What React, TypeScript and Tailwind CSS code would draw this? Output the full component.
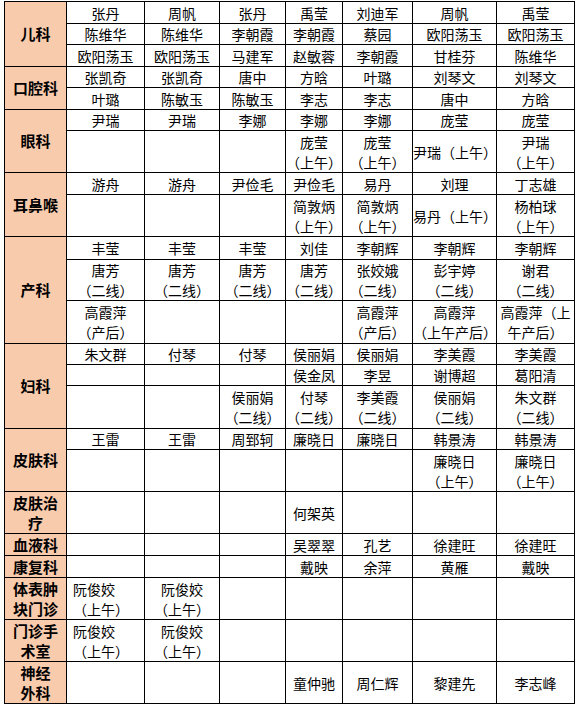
type Cell = string | null | { text: string; left?: boolean };

type Row = { h: string; cells: Cell[] };

type Dept = { name: string[]; rows: Row[] };

const depts: Dept[] = [
  {
    name: ['儿科'],
    rows: [
      { h: 'h-[22px]', cells: ['张丹', '周帆', '张丹', '禹莹', '刘迪军', '周帆', '禹莹'] },
      { h: 'h-[20px]', cells: ['陈维华', '陈维华', '李朝霞', '李朝霞', '蔡园', '欧阳荡玉', '欧阳荡玉'] },
      { h: 'h-[22px]', cells: ['欧阳荡玉', '欧阳荡玉', '马建军', '赵敏蓉', '李朝霞', '甘桂芬', '陈维华'] },
    ],
  },
  {
    name: ['口腔科'],
    rows: [
      { h: 'h-[21px]', cells: ['张凯奇', '张凯奇', '唐中', '方晗', '叶璐', '刘琴文', '刘琴文'] },
      { h: 'h-[22px]', cells: ['叶璐', '陈敏玉', '陈敏玉', '李志', '李志', '唐中', '方晗'] },
    ],
  },
  {
    name: ['眼科'],
    rows: [
      { h: 'h-[21px]', cells: ['尹瑞', '尹瑞', '李娜', '李娜', '李娜', '庞莹', '庞莹'] },
      { h: 'h-[42px]', cells: [null, null, null, '庞莹\n（上午）', '庞莹\n（上午）', '尹瑞（上午）', '尹瑞\n（上午）'] },
    ],
  },
  {
    name: ['耳鼻喉'],
    rows: [
      { h: 'h-[22px]', cells: ['游舟', '游舟', '尹俭毛', '尹俭毛', '易丹', '刘理', '丁志雄'] },
      { h: 'h-[42px]', cells: [null, null, null, '简敦炳\n（上午）', '简敦炳\n（上午）', '易丹（上午）', '杨柏球\n（上午）'] },
    ],
  },
  {
    name: ['产科'],
    rows: [
      { h: 'h-[23px]', cells: ['丰莹', '丰莹', '丰莹', '刘佳', '李朝辉', '李朝辉', '李朝辉'] },
      {
        h: 'h-[41px]',
        cells: ['唐芳\n（二线）', '唐芳\n（二线）', '唐芳\n（二线）', '唐芳\n（二线）', '张姣娥\n（二线）', '彭宇婷\n（二线）', '谢君\n（二线）'],
      },
      { h: 'h-[43px]', cells: ['高霞萍\n（产后）', null, null, null, '高霞萍\n（产后）', '高霞萍\n（上午产后）', '高霞萍（上\n午产后）'] },
    ],
  },
  {
    name: ['妇科'],
    rows: [
      { h: 'h-[21px]', cells: ['朱文群', '付琴', '付琴', '侯丽娟', '侯丽娟', '李美霞', '李美霞'] },
      { h: 'h-[21px]', cells: [null, null, null, '侯金凤', '李昱', '谢博超', '葛阳清'] },
      { h: 'h-[43px]', cells: [null, null, '侯丽娟\n（二线）', '付琴\n（二线）', '李美霞\n（二线）', '侯丽娟\n（二线）', '朱文群\n（二线）'] },
    ],
  },
  {
    name: ['皮肤科'],
    rows: [
      { h: 'h-[21px]', cells: ['王雷', '王雷', '周郅轲', '廉晓日', '廉晓日', '韩景涛', '韩景涛'] },
      { h: 'h-[42px]', cells: [null, null, null, null, null, '廉晓日\n（上午）', '廉晓日\n（上午）'] },
    ],
  },
  { name: ['皮肤治', '疗'], rows: [{ h: 'h-[42px]', cells: [null, null, null, '何架英', null, null, null] }] },
  { name: ['血液科'], rows: [{ h: 'h-[22px]', cells: [null, null, null, '吴翠翠', '孔艺', '徐建旺', '徐建旺'] }] },
  { name: ['康复科'], rows: [{ h: 'h-[22px]', cells: [null, null, null, '戴映', '余萍', '黄雁', '戴映'] }] },
  {
    name: ['体表肿', '块门诊'],
    rows: [{ h: 'h-[42px]', cells: [{ text: '阮俊姣\n（上午）', left: true }, '阮俊姣\n（上午）', null, null, null, null, null] }],
  },
  {
    name: ['门诊手', '术室'],
    rows: [{ h: 'h-[42px]', cells: [{ text: '阮俊姣\n（上午）', left: true }, '阮俊姣\n（上午）', null, null, null, null, null] }],
  },
  { name: ['神经', '外科'], rows: [{ h: 'h-[42px]', cells: [null, null, null, '童仲驰', '周仁辉', '黎建先', '李志峰'] }] },
];

const colWidths = ['w-[62px]', 'w-[78px]', 'w-[75px]', 'w-[66px]', 'w-[57px]', 'w-[70px]', 'w-[84px]', 'w-[78px]'];

function Lines({ text }: { text: string }) {
  return (
    <>
      {text.split('\n').map((p, i) => (
        <div key={i} className="whitespace-nowrap">
          {p}
        </div>
      ))}
    </>
  );
}

export default function App() {
  return (
    <div className="w-[578px] h-[706px] bg-white pt-px pl-[4px] font-['Noto_Sans_CJK_SC',sans-serif]">
      <table className="table-fixed border-collapse border border-black text-black w-[570px]">
        <colgroup>
          {colWidths.map((w, i) => (
            <col key={i} className={w} />
          ))}
        </colgroup>
        <tbody>
          {depts.map((d) =>
            d.rows.map((r, ri) => (
              <tr key={d.name.join('') + ri} className={r.h}>
                {ri === 0 && (
                  <th
                    rowSpan={d.rows.length}
                    className="border border-black bg-[#f8cbad] p-0 text-center align-middle text-[15px] font-bold leading-[20px]"
                  >
                    {d.name.map((n, i) => (
                      <div key={i}>{n}</div>
                    ))}
                  </th>
                )}
                {r.cells.map((c, ci) => {
                  const text = c === null ? null : typeof c === 'string' ? c : c.text;
                  const left = c !== null && typeof c === 'object' && c.left;
                  return (
                    <td
                      key={ci}
                      className={`border border-black p-0 align-middle text-[14px] leading-[20px] ${
                        left ? 'text-left pl-[6px]' : 'text-center'
                      }`}
                    >
                      {text && <Lines text={text} />}
                    </td>
                  );
                })}
              </tr>
            ))
          )}
        </tbody>
      </table>
    </div>
  );
}
